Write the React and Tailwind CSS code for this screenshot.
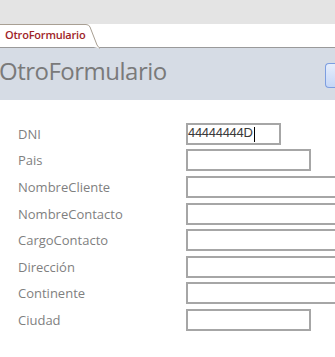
const fields = [
  { label: "DNI", width: "w-[95px]", value: "44444444D", mt: "mt-[23px]" },
  { label: "Pais", width: "w-[125px]", mt: "mt-[4px]" },
  { label: "NombreCliente", width: "w-[160px]", mt: "mt-[5px]" },
  { label: "NombreContacto", width: "w-[160px]", mt: "mt-[5px]" },
  { label: "CargoContacto", width: "w-[160px]", mt: "mt-[4px]" },
  { label: "Dirección", width: "w-[160px]", mt: "mt-[5px]" },
  { label: "Continente", width: "w-[160px]", mt: "mt-[4px]" },
  { label: "Ciudad", width: "w-[125px]", mt: "mt-[5px]" },
];

export default function App() {
  return (
    <div className="w-[335px] h-[357px] overflow-hidden bg-white font-['Open_Sans',sans-serif]">
      {/* tab strip */}
      <div className="h-[48px] bg-[#e4e4e4] flex items-end relative">
        <div className="absolute left-0 right-0 bottom-0 h-[24px] bg-white border-b border-[#9a9a9a]" />
        <div className="relative h-[24px] w-[100px]">
          <svg className="absolute inset-0" width="100" height="25" viewBox="0 0 100 25">
            <path d="M0 0.5 H86 Q89 0.5 90 3 L97 21 Q99 24 100 24.5" fill="white" stroke="#a89f93" strokeWidth="1" />
          </svg>
          <span className="relative block pl-[5px] pt-[4px] text-[11px] font-semibold leading-[14px] text-[#9e2327] tracking-[-0.2px]">
            OtroFormulario
          </span>
        </div>
      </div>

      {/* header */}
      <div className="h-[52px] bg-[#d6dce5] flex items-center justify-between">
        <h1 className="ml-[-1px] mb-[7px] text-[24px] leading-none text-[#7a7a7a] tracking-[-0.5px]">
          OtroFormulario
        </h1>
        <div className="w-[10px] h-[25px] mt-[2px] rounded-l-[4px] border border-r-0 border-[#7d9ee0] bg-gradient-to-b from-[#e6eefc] to-[#c5d6f6]" />
      </div>

      {/* fields */}
      <div className="flex flex-col">
        {fields.map((f) => (
          <div key={f.label} className={`flex items-center h-[22px] ${f.mt}`}>
            <div className="w-[186px] shrink-0 pl-[18px] text-[13px] text-[#7f7f7f] leading-none">
              {f.label}
            </div>
            <div className={`${f.width} h-[22px] border-2 border-[#a6a6a6] flex items-center shrink-0`}>
              {f.value && (
                <span className="text-[13px] text-[#3a3a3a] leading-none font-['Liberation_Sans',sans-serif] tracking-[-0.3px]">
                  {f.value}
                  <span className="inline-block w-[1px] h-[15px] bg-black align-middle ml-[1px]" />
                </span>
              )}
            </div>
          </div>
        ))}
      </div>
    </div>
  );
}
